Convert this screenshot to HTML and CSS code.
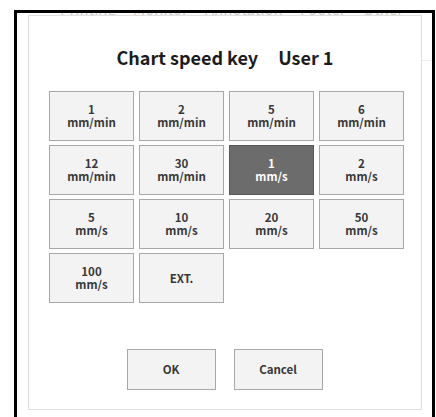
FILE: index.html
```html
<!DOCTYPE html>
<html>
<head>
<meta charset="utf-8">
<link rel="stylesheet" href="styles.css">
</head>
<body>
<div class="frame">
  <div class="ghost-tabs">
    <span class="g1">Printing</span><span class="g2">Monitor</span><span class="g3">Annotation</span><span class="g4">Footer</span><span class="g5">Other</span>
  </div>
  <div class="ghost-line"></div>
  <div class="dialog">
    <h1 class="title"><span>Chart speed key</span><span>User 1</span></h1>
    <div class="grid">
      <button class="key">1<br>mm/min</button>
      <button class="key">2<br>mm/min</button>
      <button class="key">5<br>mm/min</button>
      <button class="key">6<br>mm/min</button>
      <button class="key">12<br>mm/min</button>
      <button class="key">30<br>mm/min</button>
      <button class="key selected">1<br>mm/s</button>
      <button class="key">2<br>mm/s</button>
      <button class="key">5<br>mm/s</button>
      <button class="key">10<br>mm/s</button>
      <button class="key">20<br>mm/s</button>
      <button class="key">50<br>mm/s</button>
      <button class="key">100<br>mm/s</button>
      <button class="key">EXT.</button>
    </div>
    <div class="actions">
      <button class="act">OK</button>
      <button class="act">Cancel</button>
    </div>
  </div>
</div>
</body>
</html>
```
FILE: styles.css
```css
html, body {
  margin: 0;
  padding: 0;
  background: #ffffff;
  overflow: hidden;
}
body {
  width: 436px;
  height: 417px;
  font-family: "Noto Sans CJK JP", "Noto Sans", sans-serif;
}
.frame {
  position: relative;
  margin: 10px 0 0 14px;
  width: 421px;
  height: 420px;
  box-sizing: border-box;
  border: 3px solid #000;
  border-bottom: none;
  padding: 2px 0 0 11px;
}
.ghost-tabs {
  position: absolute;
  top: 0;
  left: 0;
  right: 0;
  height: 2px;
  overflow: hidden;
  font-size: 15px;
  color: #cfcfcf;
  white-space: nowrap;
}
.ghost-tabs span {
  position: absolute;
  top: -12px;
  line-height: 16px;
}
.g1 { left: 43px; }
.g2 { left: 116px; }
.g3 { left: 188px; }
.g4 { left: 283px; }
.g5 { left: 346px; }
.ghost-line {
  position: absolute;
  top: 47px;
  right: 0;
  width: 12px;
  height: 40px;
  border-top: 1px solid #ececec;
  border-left: 1px solid #f0f0f0;
}
.dialog {
  position: relative;
  z-index: 1;
  width: 394px;
  height: 395px;
  box-sizing: border-box;
  border: 1px solid #dedede;
  background: #fff;
  padding: 0 0 0 20px;
  display: flex;
  flex-direction: column;
}
.title {
  margin: 27px 0 0 -20px;
  height: 28px;
  font-size: 18px;
  line-height: 28px;
  font-weight: 700;
  color: #1c1c1c;
  display: flex;
  justify-content: center;
  gap: 20px;
}
.grid {
  margin-top: 20px;
  display: grid;
  grid-template-columns: repeat(4, 85px);
  grid-auto-rows: 50px;
  column-gap: 5px;
  row-gap: 4px;
}
.key, .act {
  font-family: "Noto Sans CJK JP", "Noto Sans", sans-serif;
  font-weight: 700;
  font-size: 11.5px;
  line-height: 13px;
  color: #383838;
  background: #f3f3f3;
  border: 1px solid #a8a8a8;
  padding: 0;
  margin: 0;
  text-align: center;
}
.key.selected {
  background: #6c6c6c;
  border-color: #575757;
  color: #fff;
}
.actions {
  margin: auto 0 19px -20px;
  display: flex;
  justify-content: center;
  gap: 18px;
  padding-right: 1px;
}
.act {
  width: 89px;
  height: 41px;
}
```
